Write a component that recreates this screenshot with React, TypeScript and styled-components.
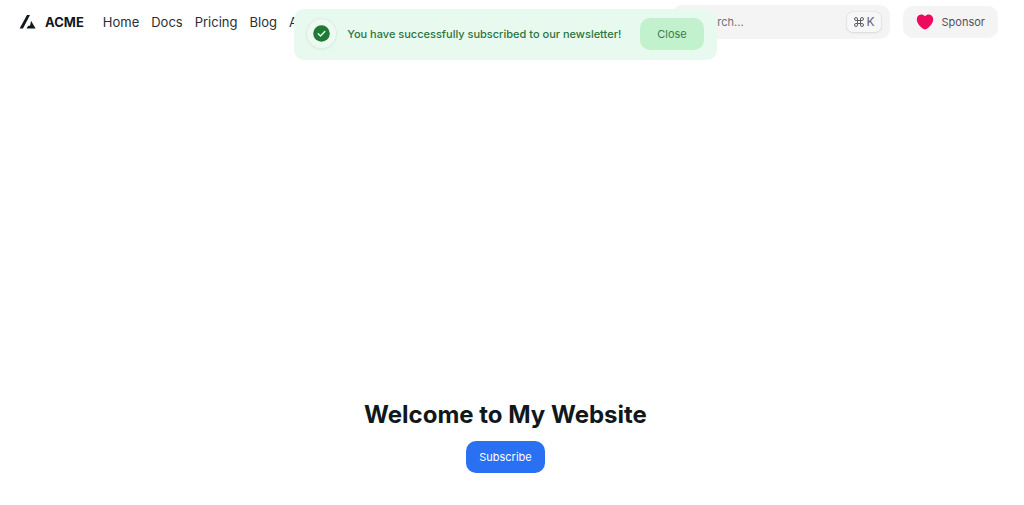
import React, { useState } from "react";
import styled, { createGlobalStyle } from "styled-components";

const GlobalStyle = createGlobalStyle`
  *, *::before, *::after { box-sizing: border-box; }
  body {
    margin: 0;
    background: #fff;
    color: #11181c;
    font-family: Inter, "Liberation Sans", sans-serif;
    font-size: 11px;
    line-height: 16px;
  }
  button, input, kbd { font: inherit; }
`;

const Page = styled.div`
  display: flex;
  flex-direction: column;
  min-height: 100vh;
  padding-right: 13px;
`;

const Header = styled.header`
  display: flex;
  align-items: center;
  justify-content: space-between;
  padding: 5px 13px 5px 19px;
`;

const Group = styled.div<{ $gap: number }>`
  display: flex;
  align-items: center;
  gap: ${({ $gap }) => $gap}px;
`;

const Brand = styled.a`
  display: flex;
  align-items: center;
  gap: 8px;
  color: #11181c;
  font-size: 13px;
  font-weight: 700;
  text-decoration: none;
`;

const NavList = styled.ul`
  display: flex;
  gap: 12px;
  margin: 0;
  padding: 0;
  list-style: none;
`;

const NavLink = styled.a`
  color: #2b2f33;
  font-size: 13px;
  text-decoration: none;
`;

const SearchBox = styled.label`
  display: flex;
  align-items: center;
  gap: 5px;
  width: 218px;
  height: 34px;
  padding: 0 9px 0 7px;
  border-radius: 10px;
  background: #f4f4f5;
  color: #71717a;
`;

const SearchInput = styled.input`
  flex: 1;
  min-width: 0;
  padding: 0;
  border: 0;
  outline: 0;
  background: transparent;
  color: #11181c;
  &::placeholder { color: #71717a; opacity: 1; }
`;

const Kbd = styled.kbd`
  display: flex;
  align-items: center;
  gap: 2px;
  height: 20px;
  padding: 0 6px;
  border-radius: 6px;
  background: #f7f7f8;
  box-shadow: 0 0 1px 1px rgba(0, 0, 0, 0.04), 0 1px 3px rgba(0, 0, 0, 0.08);
  color: #5f5f67;
  font-size: 12px;
`;

const SponsorLink = styled.a`
  display: flex;
  align-items: center;
  gap: 8px;
  height: 32px;
  padding: 0 13px;
  border-radius: 10px;
  background: #f4f4f5;
  color: #52525b;
  text-decoration: none;
`;

const Main = styled.main`
  display: flex;
  flex: 1;
  flex-direction: column;
  align-items: center;
  justify-content: flex-end;
  gap: 10px;
  padding-bottom: 32px;
`;

const Title = styled.h1`
  margin: 0;
  font-size: 24px;
  font-weight: 700;
  line-height: 32px;
`;

const Button = styled.button<{ $tone: "primary" | "success" }>`
  height: 32px;
  padding: 0 ${({ $tone }) => ($tone === "primary" ? 13 : 17)}px;
  border: 0;
  border-radius: 10px;
  background: ${({ $tone }) => ($tone === "primary" ? "#2970f3" : "#c2f1cd")};
  color: ${({ $tone }) => ($tone === "primary" ? "#fff" : "#3c7a4c")};
  cursor: pointer;
`;

const ToastRegion = styled.div`
  position: absolute;
  top: 9px;
  left: 0;
  right: 13px;
  display: flex;
  justify-content: center;
  pointer-events: none;
`;

const Toast = styled.div`
  display: flex;
  align-items: center;
  gap: 11px;
  height: 51px;
  padding: 0 13px 2px;
  border-radius: 10px;
  background: #e8faef;
  color: #2a7540;
  pointer-events: auto;
`;

const ToastText = styled.span`
  margin-right: 8px;
  font-weight: 500;
`;

const StatusBadge = styled.span`
  display: grid;
  place-items: center;
  width: 29px;
  height: 29px;
  border-radius: 50%;
  background: #edf9f1;
  box-shadow: 0 0 0 1px #dcefe2, 0 1px 3px rgba(0, 60, 20, 0.1);
`;

const links = ["Home", "Docs", "Pricing", "Blog", "About"];

export default function App() {
  const [toastOpen, setToastOpen] = useState(true);

  return (
    <Page>
      <GlobalStyle />
      <Header>
        <Group $gap={19}>
          <Brand href="#">
            <svg width="18" height="16" viewBox="0 0 18 16" fill="#11181c" aria-hidden="true">
              <path d="M8 1h3L4 14.600H.6z" />
              <path d="M12 6.800l4.600 7.800H7.600l1.400-2.600 2.200-.4z" />
            </svg>
            ACME
          </Brand>
          <nav>
            <NavList>
              {links.map((label) => (
                <li key={label}>
                  <NavLink href="#">{label}</NavLink>
                </li>
              ))}
            </NavList>
          </nav>
        </Group>
        <Group $gap={13}>
          <SearchBox>
            <svg width="14" height="14" viewBox="0 0 24 24" fill="none" stroke="currentColor" strokeWidth="2" strokeLinecap="round" aria-hidden="true">
              <circle cx="11" cy="11" r="8" />
              <path d="M21 21l-4-4" />
            </svg>
            <SearchInput type="search" placeholder="Search..." aria-label="Search" />
            <Kbd>
              <svg width="12" height="12" viewBox="0 0 24 24" fill="none" stroke="currentColor" strokeWidth="2" aria-label="Command">
                <path d="M15 6v12a3 3 0 1 0 3-3H6a3 3 0 1 0 3 3V6a3 3 0 1 0-3 3h12a3 3 0 1 0-3-3" />
              </svg>
              <span>K</span>
            </Kbd>
          </SearchBox>
          <SponsorLink href="#">
            <svg width="18" height="16" viewBox="0 0 18 16" fill="#ee0a5d" aria-hidden="true">
              <path d="M9 2.3C10.2 1 11.6.5 13 .6c2.500.2 4.200 2.100 4.200 4.700 0 4.100-3.500 7.700-6.800 9.700-.9.500-1.900.500-2.800 0C4.300 13 .8 9.400.8 5.300.8 2.700 2.500.8 5 .6c1.400-.1 2.800.4 4 1.700z" />
            </svg>
            Sponsor
          </SponsorLink>
        </Group>
      </Header>
      <Main>
        <Title>Welcome to My Website</Title>
        <Button $tone="primary" type="button" onClick={() => setToastOpen(true)}>
          Subscribe
        </Button>
      </Main>
      {toastOpen && (
        <ToastRegion>
          <Toast role="status">
            <StatusBadge>
              <svg width="17" height="17" viewBox="0 0 17 17" aria-hidden="true">
                <circle cx="8.500" cy="8.500" r="8.300" fill="#1f7a35" />
                <path d="M5.200 8.700l2.300 2.200 4.300-4.300" fill="none" stroke="#e8faef" strokeWidth="1.400" strokeLinecap="round" strokeLinejoin="round" />
              </svg>
            </StatusBadge>
            <ToastText>You have successfully subscribed to our newsletter!</ToastText>
            <Button $tone="success" type="button" onClick={() => setToastOpen(false)}>
              Close
            </Button>
          </Toast>
        </ToastRegion>
      )}
    </Page>
  );
}
